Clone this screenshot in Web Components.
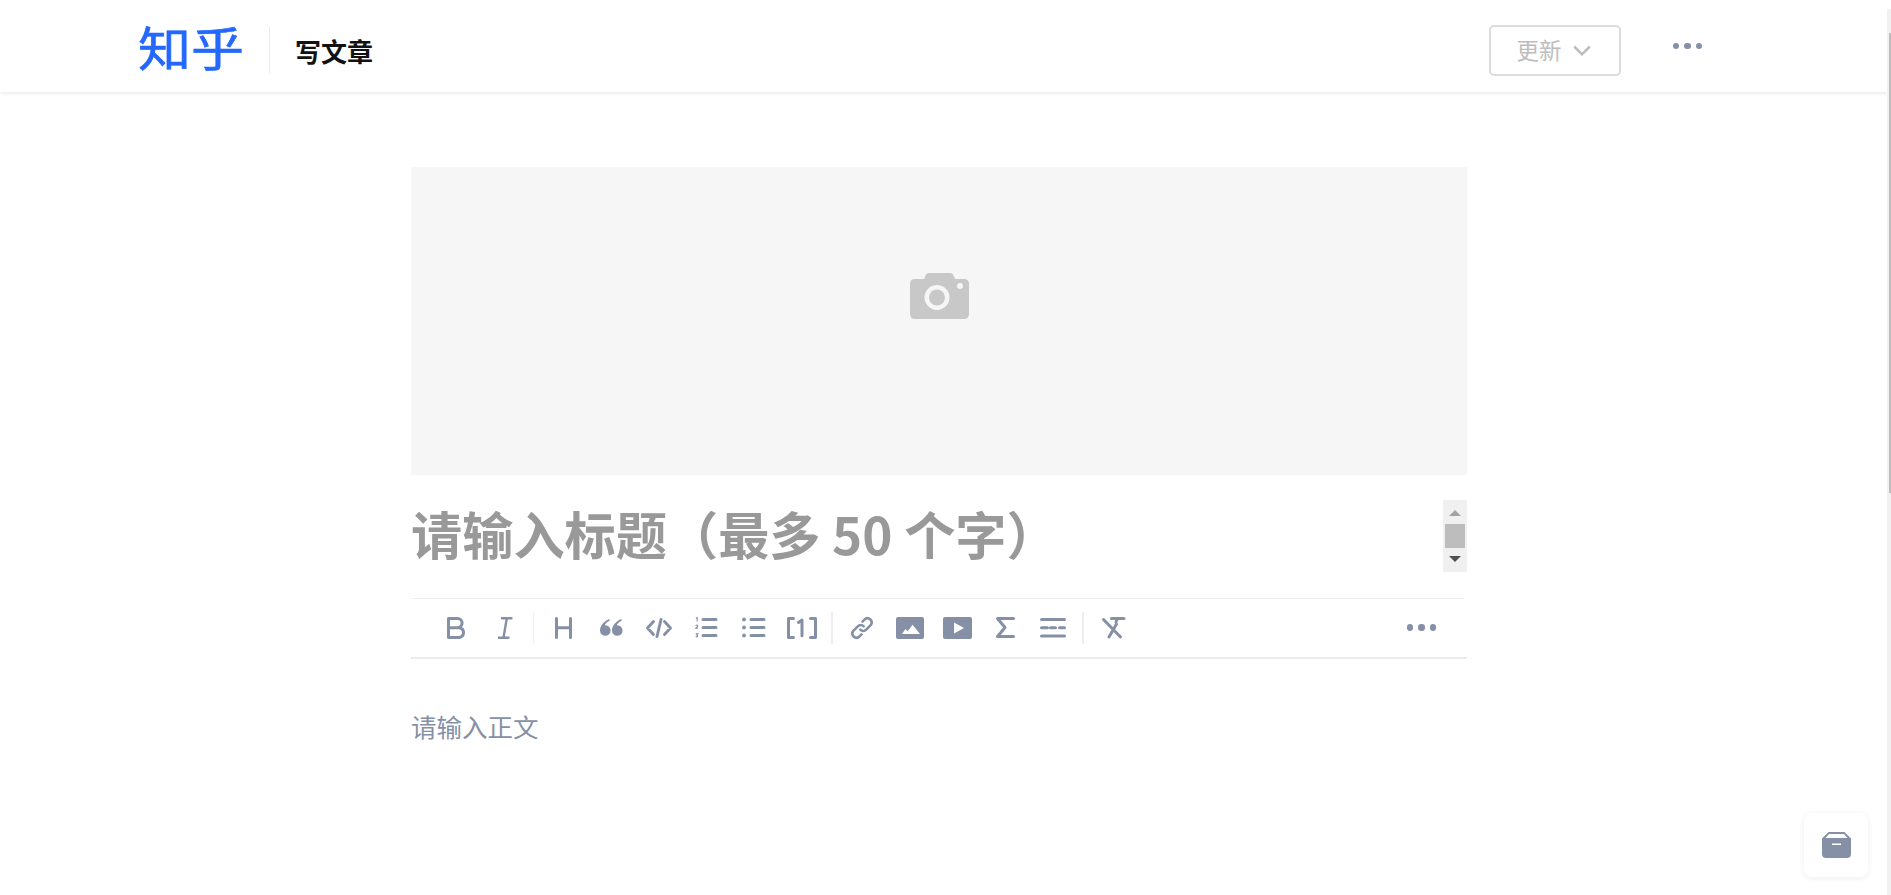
<!DOCTYPE html>
<html lang="zh"><head><meta charset="utf-8">
<style>
html,body{margin:0;padding:0;height:100%;overflow:hidden;background:#fff}
body{font-family:"Noto Sans CJK SC","Noto Sans",sans-serif}
</style></head><body>
<zh-app></zh-app>
<script>
const ST='fill="none" stroke="currentColor" stroke-linecap="round" stroke-linejoin="round"';
const I={
bold:`<path d="M1.500 1.500H10.500a4.600 4.600 0 0 1 0 9.200H1.500zM1.500 10.700H12.500a5 5 0 0 1 0 9.800H1.500z" ${ST} stroke-width="3"/>`,
italic:`<path d="M4 1.200h9.500M1 20.800h9.500M8.800 1.200L5.500 20.800" ${ST} stroke-width="2.400"/>`,
h:`<path d="M1.500 1.500v19M15.500 1.500v19M1.500 10.700h14" ${ST} stroke-width="3"/>`,
quote:'<path d="M9.500 0C4 2 0 6.500 0 11.500a5.300 5.300 0 1 0 5.300-5.300h-.4c.3-1.500 2-3.200 4.600-4.200zM21.500 0C16 2 12 6.500 12 11.500a5.300 5.300 0 1 0 5.300-5.300h-.4c.3-1.500 2-3.200 4.600-4.200z" fill="currentColor"/>',
code:`<path d="M7.500 3.500L1.500 10l6 6.500M18.500 3.500l6 6.500-6 6.500M15 1.500L11 18.500" ${ST} stroke-width="2.900"/>`,
ol:`<path d="M8 2.500h13M8 10.500h13M8 18.500h13" ${ST} stroke-width="3"/><path d="M.8 1.300L2.200.6v3.800M.6 8.600c1-.9 2.300-.4 2.200.4 0 .8-1.400 1.300-2 2.200h2.300M.7 16.800h2.100l-1.100 1.200c1.500 0 1.500 2.300-1 1.800" fill="none" stroke="currentColor" stroke-width="1.100"/>`,
ul:`<path d="M9 2.500h13M9 10.500h13M9 18.500h13" ${ST} stroke-width="3"/><circle cx="2" cy="2.500" r="1.900" fill="currentColor"/><circle cx="2" cy="10.500" r="1.900" fill="currentColor"/><circle cx="2" cy="18.500" r="1.900" fill="currentColor"/>`,
cite:`<path d="M6.500 1.500H1.500v19h5M23.500 1.500h5v19h-5" ${ST} stroke-width="3"/><path d="M11.500 5.500l3.500-2.500v15.800" ${ST} stroke-width="3"/>`,
link:`<path d="M10.300 13.700a4.100 4.100 0 0 0 5.900 0l4.700-4.800a4.200 4.200 0 0 0-5.900-5.800l-2.500 2.500M13.700 10.300a4.100 4.100 0 0 0-5.900 0l-4.700 4.800a4.200 4.200 0 0 0 5.900 5.800l2.500-2.500" ${ST} stroke-width="2.600"/>`,
img:'<path fill-rule="evenodd" d="M2 0h24a2 2 0 0 1 2 2v18a2 2 0 0 1-2 2H2a2 2 0 0 1-2-2V2a2 2 0 0 1 2-2zm4 17l3.500-5 2.200 2.200 4.800-6.400L24 17z" fill="currentColor"/>',
vid:'<path fill-rule="evenodd" d="M2 0h25a2 2 0 0 1 2 2v18a2 2 0 0 1-2 2H2a2 2 0 0 1-2-2V2a2 2 0 0 1 2-2zm9 5.500v11l10-5.500z" fill="currentColor"/>',
sum:`<path d="M17.500 1.500H1.500l7.500 9-7.500 9h16" ${ST} stroke-width="3"/>`,
hr:`<path d="M1.500 1.500h23M1.500 18h23M1.500 9.700h6M10.500 9.700h5M19.500 9.700h5" ${ST} stroke-width="3"/>`,
clear:`<path d="M9.500 1.500H22M15.500 1.500L14 5M1.500 2.500L18.500 20M14.500 7L7 20" ${ST} stroke-width="3"/>`,
};
function def(name,html,extra){
  customElements.define(name,class extends HTMLElement{
    constructor(){super();this.attachShadow({mode:'open'}).innerHTML=html;}
    connectedCallback(){extra&&extra.call(this)}
  });
}
def('zh-icon',`<style>:host{display:inline-flex;color:#8590a6}svg{display:block;overflow:visible}</style><svg></svg>`,function(){
  const s=this.shadowRoot.querySelector('svg');const w=this.getAttribute('w')||24,h=this.getAttribute('h')||24;
  s.setAttribute('width',w);s.setAttribute('height',h);s.setAttribute('viewBox',`0 0 ${w} ${h}`);
  s.innerHTML=I[this.getAttribute('n')];
});
def('zh-dots',`<style>:host{display:inline-flex;gap:5px;align-items:center}i{width:6.500px;height:6.500px;border-radius:50%;background:#8590a6}</style><i></i><i></i><i></i>`);
def('zh-header',`<style>
:host{display:flex;box-sizing:border-box;height:92px;align-items:center;padding:9px 0 0 138px;background:#fff;box-shadow:0 2px 3px rgba(18,18,18,.07);position:relative;z-index:2}
.logo{font:400 53px/1 "Noto Sans CJK SC",sans-serif;-webkit-text-stroke:.7px #2468ff;color:#2468ff;width:105px;white-space:nowrap;transform:scaleY(.88);transform-origin:50% 50%;margin-top:-8px}
.sep{width:1px;height:47px;background:#ebebeb;margin:0 25px 0 26px}
.t{font:700 26px/1 "Noto Sans CJK SC",sans-serif;color:#121212}
.sp{flex:1}
.btn{box-sizing:border-box;width:132px;height:51px;border:2px solid #dcdcdc;border-radius:5px;display:flex;align-items:center;padding:0 0 2px 26px;gap:11px;font:400 22.500px/1 "Noto Sans CJK SC",sans-serif;color:#bdbdbd}
svg{margin-top:2px}
zh-dots{margin:-9px 189px 0 52px}
</style><span class="logo">知乎</span><span class="sep"></span><span class="t">写文章</span><span class="sp"></span>
<span class="btn">更新<svg width="18" height="11" viewBox="0 0 18 11"><path d="M1.200 1.500L9 9.300l7.800-7.800" fill="none" stroke="#bdbdbd" stroke-width="2.500"/></svg></span><zh-dots></zh-dots>`);
def('zh-cover',`<style>:host{display:flex;height:308px;background:#f6f6f6;align-items:flex-start;justify-content:center}svg{margin-top:106px}</style>
<svg width="59" height="46" viewBox="0 0 59 46"><path fill-rule="evenodd" fill="#c8c8c8" d="M16 1.500Q17 0 19 0h21q2 0 3 1.500L45 6h9q5 0 5 5v30q0 5-5 5H5q-5 0-5-5V11q0-5 5-5h9zM27 12a12.500 12.500 0 1 0 0 25 12.500 12.500 0 0 0 0-25zm0 4.500a8 8 0 1 1 0 16 8 8 0 0 1 0-16zM50 10a3 3 0 1 0 0 6 3 3 0 0 0 0-6z"/></svg>`);
def('zh-scrollbox',`<style>:host{display:flex;flex-direction:column;width:24px;height:72px;background:#f0f0f0;align-items:center;box-sizing:border-box}
.a{flex:none;width:0;height:0;border-left:6px solid transparent;border-right:6px solid transparent}
.u{border-bottom:6px solid #a3a3a3;margin:10px 0 8px}.d{border-top:6px solid #505050;margin-top:8px}
.th{width:20px;height:24px;background:#bdbdbd}</style><span class="a u"></span><span class="th"></span><span class="a d"></span>`);
def('zh-title',`<style>:host{display:flex;height:123px;align-items:flex-start;justify-content:space-between;box-sizing:border-box}
.t{font:700 51.200px/72px "Noto Sans CJK SC",sans-serif;color:#999;margin-top:22px;white-space:nowrap}
zh-scrollbox{margin-top:25px}</style><span class="t">请输入标题（最多 50 个字）</span><zh-scrollbox></zh-scrollbox>`);
def('zh-tool',`<style>:host{display:inline-flex;width:47.700px;flex:none;justify-content:center;align-items:center}</style><slot></slot>`);
def('zh-toolbar',`<style>:host{display:flex;box-sizing:border-box;height:61px;align-items:center;padding:0 0 0 22px;position:relative;border-bottom:2px solid #ebebeb}
:host::before{content:"";position:absolute;left:2px;right:3px;top:0;height:1px;background:#ebebeb}
.sep{width:2px;height:32px;background:#eee;flex:none;margin:0 6px 0 5px}
.sep.n{width:1px;margin:0 5px}
.sp{flex:1}
zh-dots{margin-right:31px}</style>
<zh-tool><zh-icon w="19" h="22" n="bold"></zh-icon></zh-tool><zh-tool><zh-icon w="14" h="22" n="italic"></zh-icon></zh-tool><span class="sep n"></span>
<zh-tool><zh-icon w="17" h="22" n="h"></zh-icon></zh-tool><zh-tool><zh-icon w="22" h="17" n="quote"></zh-icon></zh-tool><zh-tool><zh-icon w="26" h="20" n="code"></zh-icon></zh-tool><zh-tool><zh-icon w="22" h="21" n="ol"></zh-icon></zh-tool><zh-tool><zh-icon w="23" h="21" n="ul"></zh-icon></zh-tool><zh-tool><zh-icon w="30" h="22" n="cite"></zh-icon></zh-tool><span class="sep"></span>
<zh-tool><zh-icon n="link"></zh-icon></zh-tool><zh-tool><zh-icon w="28" h="22" n="img"></zh-icon></zh-tool><zh-tool><zh-icon w="29" h="22" n="vid"></zh-icon></zh-tool><zh-tool><zh-icon w="19" h="21" n="sum"></zh-icon></zh-tool><zh-tool><zh-icon w="26" h="20" n="hr"></zh-icon></zh-tool><span class="sep"></span>
<zh-tool><zh-icon w="23" h="21" n="clear"></zh-icon></zh-tool><span class="sp"></span><zh-dots></zh-dots>`);
def('zh-editor',`<style>:host{display:block;width:1056px;margin:75px 0 0 411px}
.p{font:400 25.500px/36px "Noto Sans CJK SC",sans-serif;color:#8590a6;padding:49px 0 0 0}
</style><zh-cover></zh-cover><zh-title></zh-title><zh-toolbar></zh-toolbar><div class="p">请输入正文</div>`);
def('zh-scrollbar',`<style>:host{position:fixed;top:9px;right:0;width:4px;bottom:0;background:#f1f1f1;z-index:5}
i{display:block;height:460px;width:2px;margin:24px 0 0 2px;background:#bdbdbd}</style><i></i>`);
def('zh-drafts',`<style>:host{position:fixed;right:23px;bottom:18px;width:64px;height:64px;background:#fff;border-radius:8px;box-shadow:0 1px 6px rgba(18,18,18,.08);display:flex;align-items:center;justify-content:center}</style>
<svg width="29" height="26" viewBox="0 0 29 26"><path fill="#8590a6" fill-rule="evenodd" d="M6.500 0h16L29 6.500V22q0 4-4 4H4q-4 0-4-4V6.500zM7 2L3.500 6h22L22 2zM10 11.500v1.600h9v-1.600z"/></svg>`);
def('zh-app',`<style>:host{display:block;height:100vh;overflow:hidden;position:relative}</style><zh-header></zh-header><zh-editor></zh-editor><zh-drafts></zh-drafts><zh-scrollbar></zh-scrollbar>`);
</script></body></html>
